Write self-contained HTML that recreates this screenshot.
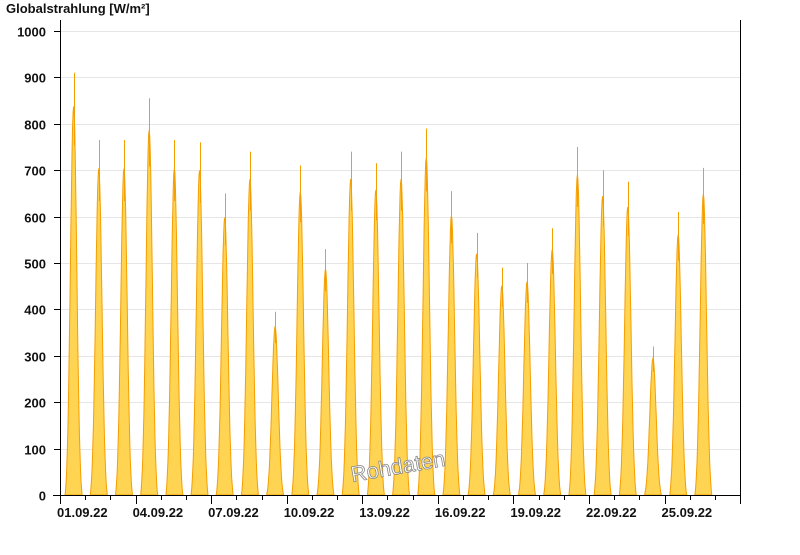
<!DOCTYPE html>
<html><head><meta charset="utf-8"><style>
body{margin:0;background:#fff;width:800px;height:550px;overflow:hidden;font-family:"Liberation Sans",Arial,sans-serif}
</style></head><body>
<svg id="s" width="800" height="550" xmlns="http://www.w3.org/2000/svg" font-family="Liberation Sans, Arial, sans-serif">
<text x="6" y="13" font-size="13" font-weight="bold" fill="#111">Globalstrahlung [W/m²]</text>
<g id="grid" stroke="#e6e6e6" stroke-width="1"></g>
<g id="bars"></g>
<g stroke="#000" stroke-width="1" fill="none">
<line x1="60.5" y1="20" x2="60.5" y2="495"/>
<line x1="740.5" y1="20" x2="740.5" y2="495"/>
<line x1="53" y1="495.5" x2="741" y2="495.5"/>
</g>
<g id="ax" font-size="13" font-weight="bold" fill="#111"></g>
<text x="398" y="474" font-size="22" fill="#fff" stroke="#888" stroke-width="0.8" text-anchor="middle" transform="rotate(-10 398 467)">Rohdaten</text>
</svg>
<script>
var ns="http://www.w3.org/2000/svg";
function el(t,a,p,txt){var e=document.createElementNS(ns,t);for(var k in a)e.setAttribute(k,a[k]);if(txt)e.textContent=txt;p.appendChild(e);return e;}
var g=document.getElementById('grid'),ax=document.getElementById('ax'),b=document.getElementById('bars');
function Y(v){return 495-v*0.464;}
for(var v=0;v<=1000;v+=100){var y=Math.round(Y(v))+0.5;if(v>0)el('line',{x1:61,y1:y,x2:740,y2:y},g);
el('line',{x1:54,y1:y,x2:60,y2:y,stroke:'#000'},ax);
el('text',{x:46,y:y+5,'text-anchor':'end'},ax,String(v));}
var dw=25.19;
for(var i=0;i<=27;i++){var x=Math.round(60+i*dw)+0.5;el('line',{x1:x,y1:495,x2:x,y2:(i%3==0?504:500),stroke:'#000'},ax);}
var lab=['01.09.22','04.09.22','07.09.22','10.09.22','13.09.22','16.09.22','19.09.22','22.09.22','25.09.22'];
for(var i=0;i<lab.length;i++)el('text',{x:57+i*3*dw,y:517,'font-size':13,'text-anchor':'start'},ax,lab[i]);
var pk=[910,765,765,855,765,760,650,740,395,710,530,740,715,740,790,655,565,490,500,575,750,700,675,320,610,705];
for(var d=0;d<pk.length;d++){
var c=60+d*dw+dw/2+1,hw=8.5,P=pk[d]*0.92,pts=[];
for(var k=-16;k<=16;k++){var t=k/16;var f=Math.exp(-Math.pow(t*1.9,2))-Math.exp(-3.61)*(1-t*t)*0;f=Math.max(0,(f-Math.exp(-3.61))/(1-Math.exp(-3.61)));pts.push((c+t*hw).toFixed(1)+','+Y(P*f).toFixed(1));}
el('polygon',{points:pts.join(' '),fill:'#ffd452',stroke:'#f59e00','stroke-width':1},b);
var sx=Math.round(c)+0.5;
el('line',{x1:sx,y1:Y(P*0.9),x2:sx,y2:Y(pk[d]),stroke:'#f59e00','stroke-width':1},b);
}
</script>
</body></html>
